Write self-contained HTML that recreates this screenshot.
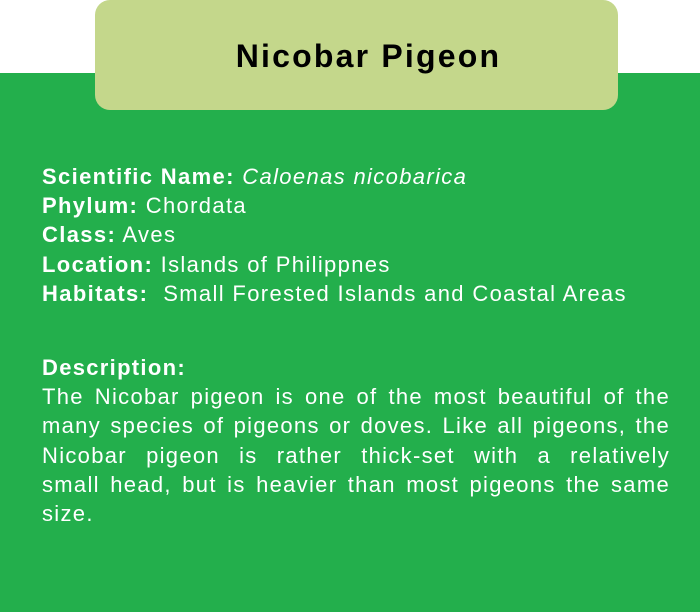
<!DOCTYPE html>
<html><head><style>
html,body{margin:0;padding:0;width:700px;height:612px;overflow:hidden;background:#fff;font-family:"Liberation Sans",sans-serif}
.green{position:absolute;left:0;top:73px;width:700px;height:539px;background:#23af4c}
.title{position:absolute;left:95px;top:0;width:523px;height:110px;background:#c4d78b;border-radius:15px;box-sizing:border-box;text-align:center;padding-left:24px;font-weight:bold;font-size:32px;letter-spacing:2.2px;line-height:112px;color:#000}
.info{position:absolute;left:42px;top:162px;width:640px;color:#fff;font-size:22px;letter-spacing:1.35px;line-height:29.2px;white-space:nowrap}
.desc{position:absolute;left:42px;top:353px;width:628px;color:#fff;font-size:22px;letter-spacing:1.3px;line-height:29.2px}
.j{text-align:justify;text-align-last:justify;white-space:nowrap}
b{font-weight:bold}
</style></head><body>
<div class="green"></div>
<div class="title">Nicobar Pigeon</div>
<div class="info">
<b>Scientific Name:</b> <i>Caloenas nicobarica</i><br>
<b>Phylum:</b> Chordata<br>
<b>Class:</b> Aves<br>
<b>Location:</b> Islands of Philippnes<br>
<b>Habitats:</b>&nbsp; Small Forested Islands and Coastal Areas
</div>
<div class="desc"><b>Description:</b>
<div class="j">The Nicobar pigeon is one of the most beautiful of the</div>
<div class="j">many species of pigeons or doves. Like all pigeons, the</div>
<div class="j">Nicobar pigeon is rather thick-set with a relatively</div>
<div class="j">small head, but is heavier than most pigeons the same</div>
<div>size.</div></div>
</body></html>
